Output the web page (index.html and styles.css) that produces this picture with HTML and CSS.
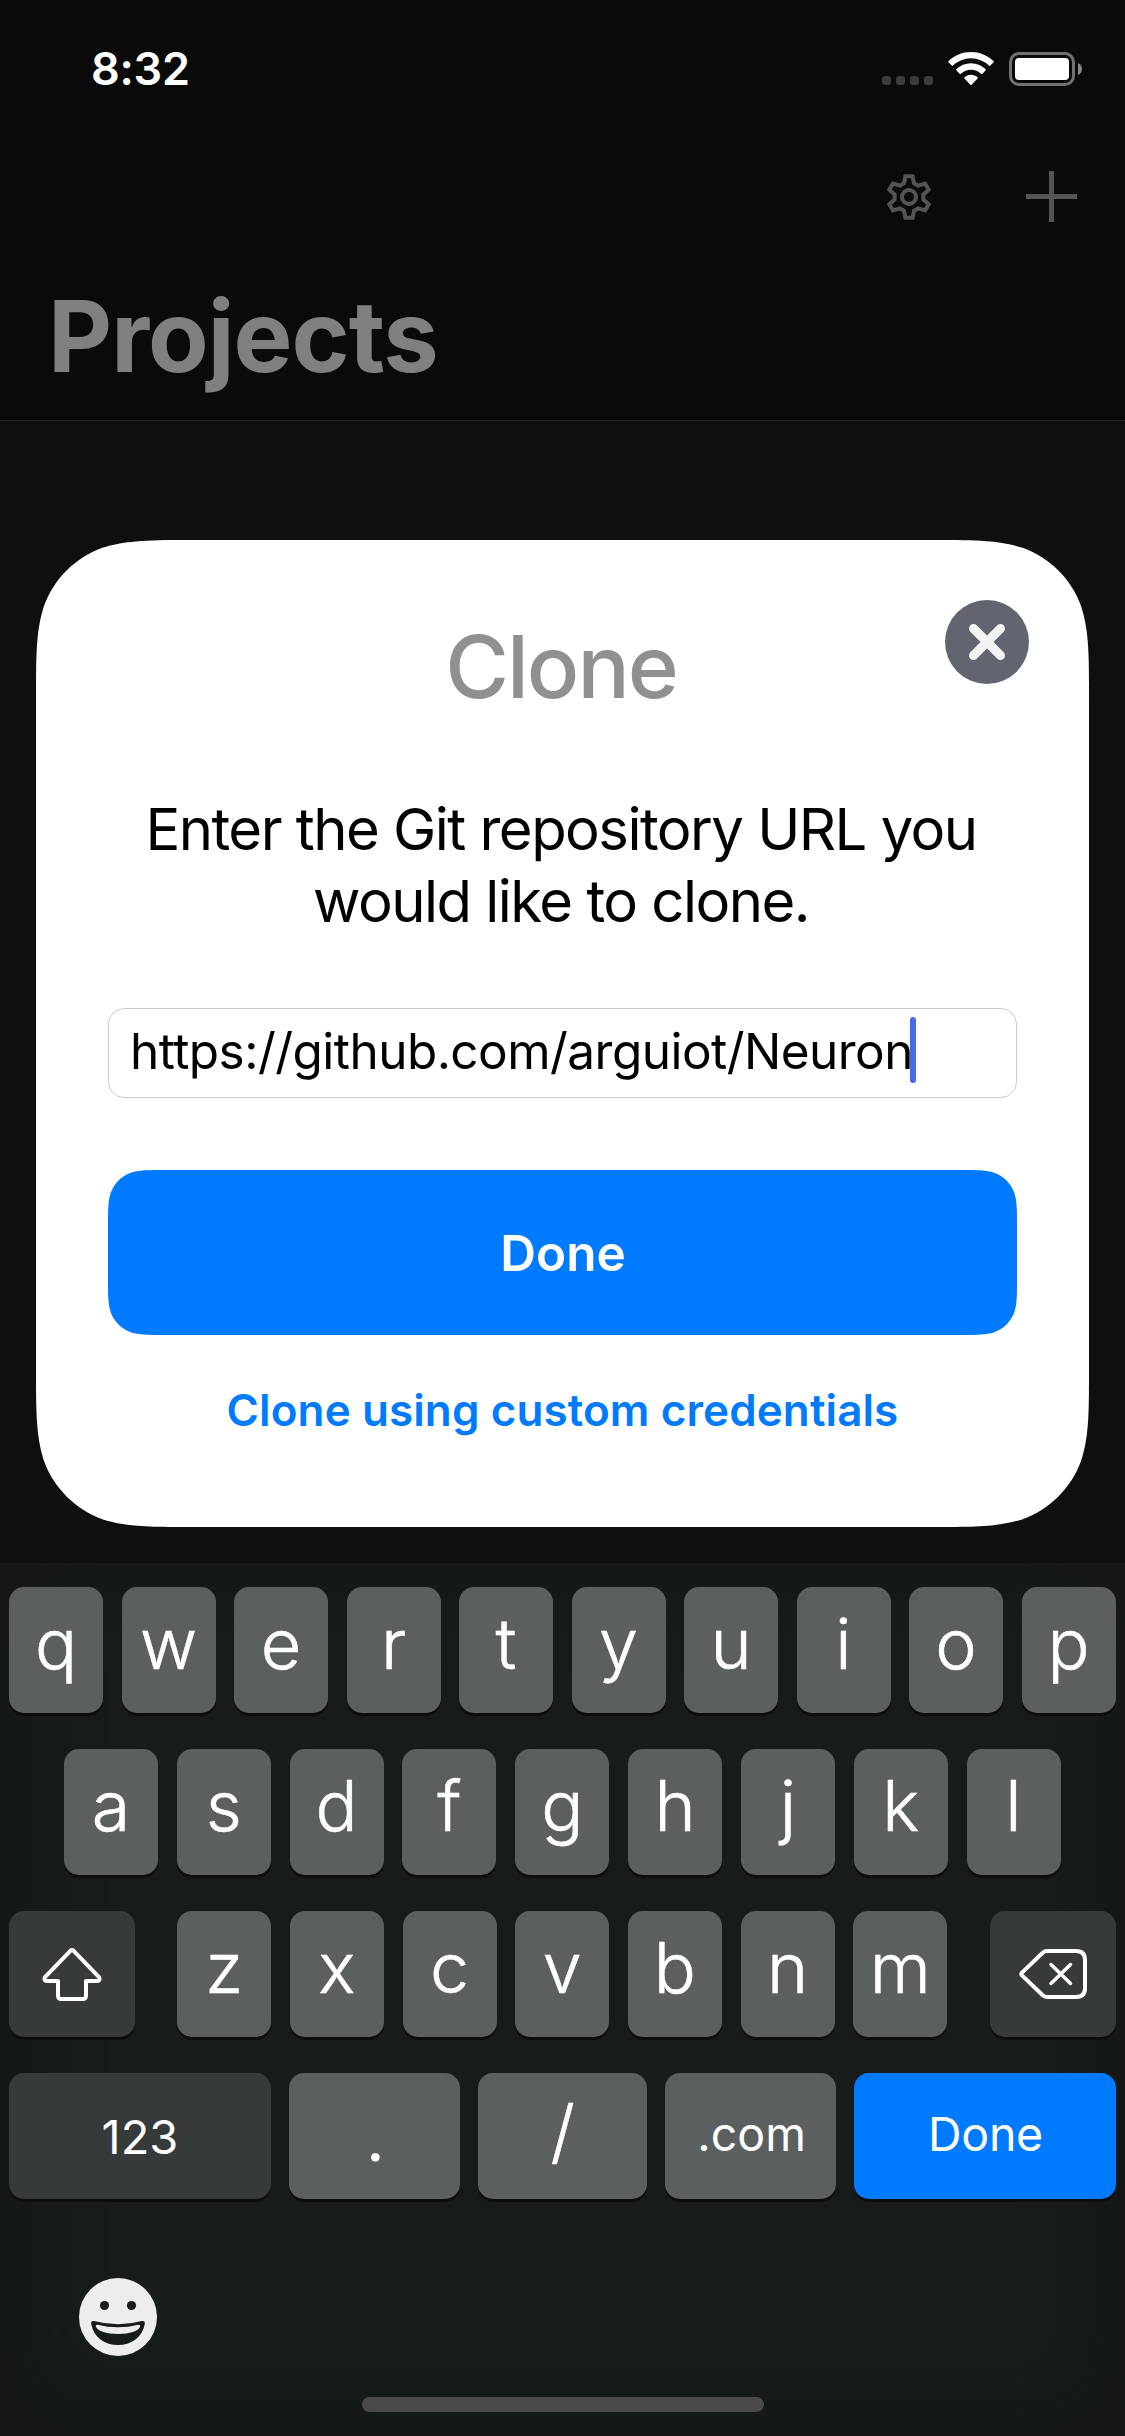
FILE: index.html
```html
<!DOCTYPE html>
<html lang="en">
<head>
<meta charset="utf-8">
<title>Projects</title>
<link rel="stylesheet" href="styles.css">
</head>
<body>
<header class="header">
  <div class="status">
    <span class="time">8:32</span>
    <svg class="signal" width="51" height="34" viewBox="0 0 51 34"><g fill="#3b3b3b"><rect y="24" width="9" height="9" rx="3"/><rect x="14" y="24" width="9" height="9" rx="3"/><rect x="28" y="24" width="9" height="9" rx="3"/><rect x="42" y="24" width="9" height="9" rx="3"/></g></svg>
    <svg class="wifi" width="46" height="34" viewBox="0 0 46 34" fill="#fff"><path d="M23 0C31.700 0 39.600 3.400 45.400 9Q46 9.700 45.400 10.400L42.300 13.600Q41.700 14.200 41 13.600A26 26 0 0 0 5 13.600Q4.300 14.200 3.700 13.600L.6 10.400Q0 9.700.6 9C6.400 3.400 14.300 0 23 0Z"/><path d="M23 11.300C28.600 11.300 33.700 13.500 37.500 17.100Q38.100 17.800 37.500 18.500L34.400 21.700Q33.700 22.300 33 21.700A14.600 14.600 0 0 0 13 21.700Q12.300 22.300 11.600 21.700L8.500 18.500Q7.900 17.800 8.500 17.100C12.300 13.500 17.400 11.300 23 11.300Z"/><path d="M23 22.700C25.500 22.700 27.800 23.600 29.500 25.200Q30.100 25.900 29.500 26.600L23.700 32.700Q23 33.300 22.300 32.700L16.500 26.600Q15.900 25.900 16.500 25.200C18.200 23.600 20.500 22.700 23 22.700Z"/></svg>
    <svg class="battery" width="73" height="34" viewBox="0 0 73 34"><rect x="1.500" y="1.500" width="63" height="31" rx="8.500" fill="none" stroke="#717171" stroke-width="3"/><rect x="6" y="6" width="54" height="22" rx="4" fill="#fff"/><path d="M69 11C74.300 13 74.300 21 69 23Z" fill="#8a8a8a"/></svg>
  </div>
  <nav class="nav">
    <svg width="44" height="46" viewBox="-22 -23 44 46" fill="none" stroke="#545454" stroke-width="4"><path stroke-linejoin="miter" d="M-3.600 -20.700H3.600L5 -13.700L9 -11.400L16.100 -13.500L19.700 -7.300L14.400 -2.500V2.500L19.700 7.300L16.100 13.500L9 11.400L5 13.700L3.600 20.700H-3.600L-5 13.700L-9 11.400L-16.100 13.500L-19.700 7.300L-14.400 2.500V-2.500L-19.700 -7.300L-16.100 -13.500L-9 -11.400L-5 -13.700Z"/><circle r="7"/></svg>
    <svg width="51" height="51" viewBox="0 0 51 51" fill="none" stroke="#545454" stroke-width="5"><path d="M25.500 0V51M0 25.500H51"/></svg>
  </nav>
  <h1 class="title">Projects</h1>
</header>

<main class="content">
  <section class="card">
    <button class="close" aria-label="Close"><svg width="84" height="84" viewBox="0 0 84 84"><circle cx="42" cy="42" r="42" fill="#61656f"/><path d="M28.500 28.500L55.500 55.500M55.500 28.500L28.500 55.500" stroke="#f2f4f4" stroke-width="9" stroke-linecap="round"/></svg></button>
    <h2 class="card-title">Clone</h2>
    <p class="message">Enter the Git repository URL you<br>would like to clone.</p>
    <div class="field"><span class="url">https://github.com/arguiot/Neuron</span><i class="caret"></i></div>
    <button class="primary">Done</button>
    <a class="link">Clone using custom credentials</a>
  </section>
</main>

<section class="keyboard">
  <div class="row">
    <span class="key">q</span><span class="key">w</span><span class="key">e</span><span class="key">r</span><span class="key">t</span><span class="key">y</span><span class="key">u</span><span class="key">i</span><span class="key">o</span><span class="key">p</span>
  </div>
  <div class="row middle">
    <span class="key">a</span><span class="key">s</span><span class="key">d</span><span class="key">f</span><span class="key">g</span><span class="key">h</span><span class="key">j</span><span class="key">k</span><span class="key">l</span>
  </div>
  <div class="row">
    <span class="key dark side"><svg width="60" height="54" viewBox="0 0 60 54" fill="none" stroke="#fff" stroke-width="4" stroke-linejoin="round"><path d="M28.600 3.700Q30 2.300 31.400 3.700L57 30.200Q58.500 33 56 34H44V48.500Q44 52 40.500 52H19.500Q16 52 16 48.500V34H4Q1.500 33 3 30.200Z"/></svg></span>
    <div class="letters"><span class="key">z</span><span class="key">x</span><span class="key">c</span><span class="key">v</span><span class="key">b</span><span class="key">n</span><span class="key">m</span></div>
    <span class="key dark side"><svg width="68" height="50" viewBox="0 0 68 50" fill="none" stroke="#fff" stroke-width="4" stroke-linejoin="round" stroke-linecap="round"><path d="M28 2H57Q66 2 66 11V39Q66 48 57 48H28Q25.500 48 23.700 46.200L3 26.400Q1.500 25 3 23.600L23.700 3.800Q25.500 2 28 2Z"/><path stroke-width="3.500" d="M32 15.500L51.500 34.500M51.500 15.500L32 34.500"/></svg></span>
  </div>
  <div class="row bottom">
    <span class="key dark numbers">123</span><span class="key dot">.</span><span class="key slash">/</span><span class="key com">.com</span><span class="key done">Done</span>
  </div>
  <svg class="emoji" width="78" height="78" viewBox="0 0 78 78"><circle cx="39" cy="39" r="39" fill="#ededed"/><g fill="#171b1c"><circle cx="25.500" cy="27.500" r="4.600"/><circle cx="52.500" cy="27.500" r="4.600"/><path d="M15 43Q39 49.500 63 43Q66.200 42.600 65.800 46C63 60 52 67 39 67S15 60 12.200 46Q11.800 42.600 15 43Z"/></g><path d="M18.500 46.700Q39 52 59.500 46.700Q61.800 46.700 61 49Q57.500 55.700 39 56Q20.500 55.700 17 49Q16.200 46.700 18.500 46.700Z" fill="#ededed"/></svg>
  <div class="home"></div>
</section>
</body>
</html>
```
FILE: styles.css
```css
* { box-sizing: border-box; }

body {
  margin: 0;
  width: 1125px;
  height: 2436px;
  display: flex;
  flex-direction: column;
  background: #0e0f11;
  font-family: Inter, "Liberation Sans", sans-serif;
  overflow: hidden;
}

svg { display: block; flex: none; }

button { border: 0; padding: 0; font-family: inherit; }

.header {
  height: 421px;
  background: #0a0a0a;
  border-bottom: 1px solid #222;
}

.status {
  height: 138px;
  display: flex;
  align-items: center;
  padding: 0 43px 0 91px;
}

.time {
  flex: 1;
  color: #fff;
  font-size: 45px;
  font-weight: 600;
  letter-spacing: -.3px;
  line-height: 54px;
}

.signal { margin-right: 15px; }
.wifi { margin-right: 15px; }

.nav {
  height: 117px;
  display: flex;
  justify-content: flex-end;
  align-items: center;
  gap: 95px;
  padding-right: 48px;
}

.title {
  margin: 0;
  padding-left: 48px;
  color: #808080;
  font-size: 99px;
  font-weight: 700;
  letter-spacing: -1px;
  line-height: 162px;
}

.content {
  height: 1142px;
  padding: 119px 36px 0;
}

.card {
  position: relative;
  height: 987px;
  padding: 75px 72px 0;
  display: flex;
  flex-direction: column;
  background: #fff;
  text-align: center;
  clip-path: path("M160.510 0H892.490C938.710 0 961.820 0 986.690 7.870C1013.850 17.750 1035.250 39.150 1045.130 66.310C1053 91.180 1053 114.290 1053 160.510V826.490C1053 872.710 1053 895.820 1045.130 920.690C1035.250 947.850 1013.850 969.250 986.690 979.130C961.820 987 938.710 987 892.490 987H160.510C114.290 987 91.180 987 66.310 979.130C39.150 969.250 17.750 947.850 7.870 920.690C0 895.820 0 872.710 0 826.490V160.510C0 114.290 0 91.180 7.870 66.310C17.750 39.150 39.150 17.750 66.310 7.870C91.180 0 114.290 0 160.510 0Z");
}

.close {
  position: absolute;
  top: 60px;
  right: 60px;
  width: 84px;
  height: 84px;
  background: none;
}

.card-title {
  margin: 0;
  padding-right: 3px;
  color: #8f9092;
  font-size: 87px;
  font-weight: 500;
  letter-spacing: -2px;
  line-height: 104px;
}

.message {
  margin: 75px 0 0;
  padding-right: 3px;
  color: #000;
  font-size: 58px;
  letter-spacing: -1.530px;
  line-height: 71.500px;
  white-space: nowrap;
}

.field {
  height: 90px;
  margin-top: 71px;
  padding-left: 21px;
  display: flex;
  align-items: center;
  border: 1px solid #ccc;
  border-radius: 16px;
  color: #000;
  font-size: 49.500px;
  letter-spacing: -.54px;
  line-height: 60px;
  white-space: nowrap;
}

.url { padding-bottom: 4px; }

.caret {
  width: 6px;
  height: 66px;
  margin: 0 0 6px -3px;
  border-radius: 3px;
  background: #466ae9;
}

.primary {
  height: 165px;
  margin-top: 72px;
  padding-left: 1px;
  background: #007aff;
  color: #fff;
  font-size: 49.500px;
  font-weight: 600;
  clip-path: path("M55.030 0H853.970C869.810 0 877.740 0 886.270 2.700C895.580 6.090 902.910 13.420 906.300 22.730C909 31.260 909 39.190 909 55.030V109.970C909 125.810 909 133.740 906.300 142.270C902.910 151.580 895.580 158.910 886.270 162.300C877.740 165 869.810 165 853.970 165H55.030C39.190 165 31.260 165 22.730 162.300C13.420 158.910 6.090 151.580 2.700 142.270C0 133.740 0 125.810 0 109.970V55.030C0 39.190 0 31.260 2.700 22.730C6.090 13.420 13.420 6.090 22.730 2.700C31.260 0 39.190 0 55.030 0Z");
}

.link {
  margin-top: 45px;
  color: #007aff;
  font-size: 44px;
  font-weight: 600;
  letter-spacing: .1px;
  line-height: 60px;
}

.keyboard {
  flex: 1;
  padding: 24px 9.500px 0 9px;
  display: flex;
  flex-direction: column;
  gap: 36px;
  background: #171b1c;
  box-shadow: inset 0 0 90px rgba(18, 18, 16, .6);
}

.row {
  height: 126px;
  display: flex;
  justify-content: space-between;
}

.middle { padding: 0 55px; }

.letters {
  width: 770px;
  display: flex;
  justify-content: space-between;
}

.key {
  width: 94px;
  height: 126px;
  display: flex;
  justify-content: center;
  border-radius: 15px;
  background: #5c5f60;
  box-shadow: 0 3px 0 #0b0d0e;
  color: #fff;
  font-size: 70px;
  font-weight: 300;
  line-height: 114px;
  -webkit-text-stroke: .6px #fff;
}

.dark { background: #373a3b; }

.side { width: 126px; align-items: center; }

.numbers, .com, .done { font-size: 46.500px; font-weight: 400; -webkit-text-stroke: 0; }
.numbers { width: 262px; font-size: 47px; line-height: 128px; }
.dot { width: 171px; padding-left: 2px; line-height: 125px; -webkit-text-stroke: 1px #fff; }
.slash { width: 169px; padding-left: 1px; line-height: 116px; }
.com { width: 171px; padding-left: 3px; line-height: 122px; }
.done { width: 262px; padding-left: 2px; line-height: 122px; letter-spacing: -.3px; background: #007aff; }

.emoji { margin: 43px 0 0 70px; }

.home {
  width: 402px;
  height: 15px;
  margin: 5px 0 0 353px;
  border-radius: 8px;
  background: #4a4a4a;
}
```
